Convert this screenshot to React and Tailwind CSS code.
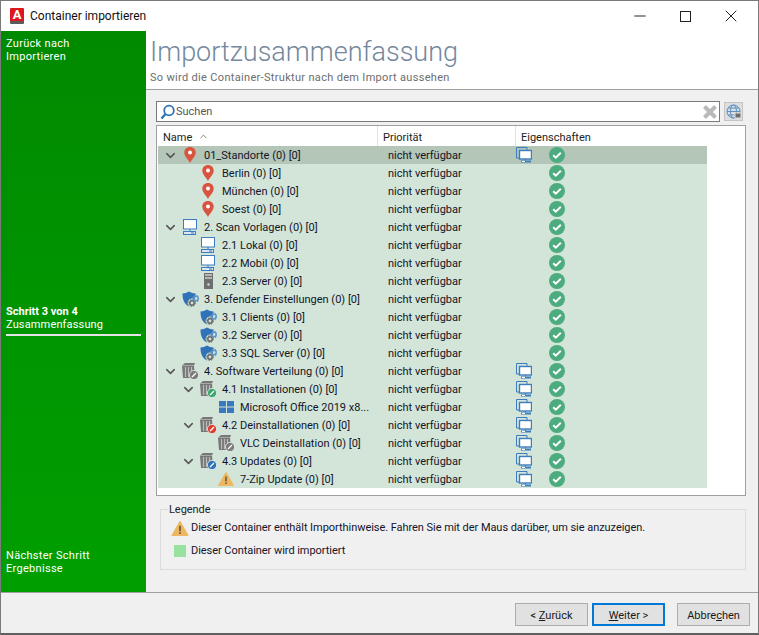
import { ChevronDown, ChevronUp, Minus, X } from 'lucide-react';

const Pin = () => (
  <svg width="12" height="16" viewBox="0 0 12 16">
    <path d="M6 0C2.6 0 0.3 2.4 0.3 5.6 0.3 9.4 4 12.5 6 16 8 12.5 11.7 9.4 11.7 5.6 11.7 2.4 9.4 0 6 0Z" fill="#d9543f" />
    <circle cx="6" cy="5.6" r="2" fill="#fff" />
  </svg>
);

const Monitor = () => (
  <svg width="16" height="16" viewBox="0 0 16 16" fill="none">
    <rect x="1.5" y="0.5" width="13" height="9.5" fill="#fff" stroke="#3d7cc0" />
    <path d="M8 10v2" stroke="#3d7cc0" />
    <rect x="1.5" y="12.5" width="12" height="3" fill="#dbe7f3" stroke="#3d7cc0" />
    <path d="M9 14h3" stroke="#3d7cc0" />
  </svg>
);

const Server = () => (
  <svg width="9" height="16" viewBox="0 0 9 16">
    <rect width="9" height="16" fill="#6f6f6f" />
    <rect x="1" y="1" width="7" height="2" fill="#b5b5b5" />
    <rect x="1" y="4" width="7" height="2" fill="#b5b5b5" />
    <circle cx="4.5" cy="11.5" r="1.2" fill="#d5d5d5" />
  </svg>
);

const Gear = ({ x, y, color = '#666' }) => (
  <g>
    <circle cx={x} cy={y} r="2.2" fill="none" stroke={color} strokeWidth="1.5" />
    <circle cx={x} cy={y} r="3.4" fill="none" stroke={color} strokeWidth="1" strokeDasharray="1.4 1.3" />
  </g>
);

const Shield = () => (
  <svg width="17" height="17" viewBox="0 0 17 17">
    <path d="M7 0.5C5 1.8 2.8 2.4 0.5 2.4 0.5 8.5 2 12.5 7 15.5 12 12.5 13.5 8.5 13.5 2.4 11.2 2.4 9 1.8 7 0.5Z" fill="#2f72b8" />
    <circle cx="10" cy="12" r="4.4" fill="#d2e5d8" />
    <Gear x={10} y={12} />
    <Gear x={14} y={7.5} color="#5d93c8" />
  </svg>
);

const Box = ({ badge = '#7c7c7c' }) => (
  <svg width="17" height="17" viewBox="0 0 17 17">
    <path d="M0 2.5L3 0h10l-1 2.5 1 12.5H1Z" fill="#777" />
    <path d="M3.5 4v10M6.5 4v10M9.5 4v10" stroke="#bcbcbc" strokeWidth="1.2" />
    <path d="M0 2.5h12" stroke="#a9a9a9" />
    <circle cx="12" cy="12" r="4.6" fill={badge} stroke="#e8f0ea" strokeWidth="0.8" />
    <path d="M10 14l4-4" stroke="#fff" strokeWidth="1.3" />
  </svg>
);

const WinLogo = () => (
  <svg width="15" height="12" viewBox="0 0 15 12" fill="#3a78bd">
    <rect width="7" height="5.5" />
    <rect x="8" width="7" height="5.5" />
    <rect y="6.5" width="7" height="5.5" />
    <rect x="8" y="6.5" width="7" height="5.5" />
  </svg>
);

const Warn = ({ w = 16, h = 14 }) => (
  <svg width={w} height={h} viewBox="0 0 16 14">
    <path d="M8 0.5L15.5 13.5H0.5Z" fill="#ecb760" stroke="#ecb760" strokeLinejoin="round" />
    <path d="M8 4.5v5" stroke="#6b5a3a" strokeWidth="1.6" />
    <path d="M8 10.5v1.6" stroke="#6b5a3a" strokeWidth="1.6" />
  </svg>
);

const Screens = () => (
  <svg width="16" height="16" viewBox="0 0 16 16" fill="none">
    <path d="M3.5 11H0.5V0.5H11v2.5" stroke="#3d7cc0" />
    <rect x="3.5" y="3.5" width="12" height="8.5" fill="#fff" stroke="#3d7cc0" strokeWidth="1.4" />
    <path d="M9.5 12v1.5" stroke="#3d7cc0" />
    <rect x="5" y="13.5" width="10" height="2" fill="#3d7cc0" />
    <rect x="6" y="14" width="3" height="1" fill="#fff" />
  </svg>
);

const Check = () => (
  <svg width="16" height="16" viewBox="0 0 16 16" fill="none">
    <circle cx="8" cy="8" r="8" fill="#4cab7f" />
    <path d="M4.2 8.2l2.6 2.5 5-5" stroke="#fff" strokeWidth="2" />
  </svg>
);

const rows = [
  { name: '01_Standorte (0) [0]', level: 0, open: true, icon: <Pin />, screens: true, selected: true },
  { name: 'Berlin (0) [0]', level: 1, icon: <Pin /> },
  { name: 'München (0) [0]', level: 1, icon: <Pin /> },
  { name: 'Soest (0) [0]', level: 1, icon: <Pin /> },
  { name: '2. Scan Vorlagen (0) [0]', level: 0, open: true, icon: <Monitor /> },
  { name: '2.1 Lokal (0) [0]', level: 1, icon: <Monitor /> },
  { name: '2.2 Mobil (0) [0]', level: 1, icon: <Monitor /> },
  { name: '2.3 Server (0) [0]', level: 1, icon: <Server /> },
  { name: '3. Defender Einstellungen (0) [0]', level: 0, open: true, icon: <Shield /> },
  { name: '3.1 Clients (0) [0]', level: 1, icon: <Shield /> },
  { name: '3.2 Server (0) [0]', level: 1, icon: <Shield /> },
  { name: '3.3 SQL Server (0) [0]', level: 1, icon: <Shield /> },
  { name: '4. Software Verteilung (0) [0]', level: 0, open: true, icon: <Box />, screens: true },
  { name: '4.1 Installationen (0) [0]', level: 1, open: true, icon: <Box badge="#3aa76d" />, screens: true },
  { name: 'Microsoft Office 2019 x8...', level: 2, icon: <WinLogo />, screens: true },
  { name: '4.2 Deinstallationen (0) [0]', level: 1, open: true, icon: <Box badge="#d9402f" />, screens: true },
  { name: 'VLC Deinstallation (0) [0]', level: 2, icon: <Box />, screens: true },
  { name: '4.3 Updates (0) [0]', level: 1, open: true, icon: <Box badge="#2f72b8" />, screens: true },
  { name: '7-Zip Update (0) [0]', level: 2, icon: <Warn />, screens: true },
];

const indent = ['w-0', 'w-[18px]', 'w-[36px]'];

const TreeRow = ({ row }) => (
  <div className={`flex h-[18px] items-center ${row.selected ? 'bg-[#b3c6b7]' : 'bg-[#d2e5d8]'}`}>
    <div className="flex w-[220px] items-center pl-[2px]">
      <div className={indent[row.level]} />
      <div className="flex w-[21px] justify-center">
        {row.open && <ChevronDown size={15} strokeWidth={2.4} className="text-[#555]" />}
      </div>
      <div className="flex w-[18px] justify-center">{row.icon}</div>
      <span className="ml-[5px] truncate pt-[2px] leading-[16px]">{row.name}</span>
    </div>
    <div className="w-[138px] pl-[10px] pt-[2px] leading-[16px]">nicht verfügbar</div>
    <div className="flex w-[33px] justify-start">{row.screens && <Screens />}</div>
    <Check />
  </div>
);

const Btn = ({ children, focus }) => (
  <button className={`h-[23px] w-[73px] bg-[#e1e1e1] pt-px text-[#1a1a1a] ${focus ? 'border-2 border-[#0078d7]' : 'border border-[#adadad]'}`}>
    {children}
  </button>
);

export default function App() {
  return (
    <div className="flex h-[635px] w-[759px] flex-col overflow-hidden border border-b-2 border-[#7a7a7a] border-b-[#5f5f5f] bg-[#f0f0f0] font-['Roboto',sans-serif] text-[11px] leading-none text-[#14142a]">
      {/* title bar */}
      <div className="flex h-[30px] shrink-0 items-center bg-white pl-[9px]">
        <div className="flex h-[16px] w-[14px] items-start justify-center overflow-hidden rounded-[1px] border-b-[3px] border-[#5c5c5c] bg-[#e0161f] text-[13px] font-bold leading-[13px] text-white">A</div>
        <span className="ml-[6px] text-[12px] leading-[16px] text-[#111]">Container importieren</span>
        <div className="ml-auto flex items-center text-[#222]">
          <Minus size={18} strokeWidth={1.3} className="mr-[31px]" />
          <div className="mr-[30px] h-[11px] w-[11px] border border-[#222]" />
          <X size={20} strokeWidth={1.2} className="mr-[17px]" />
        </div>
      </div>

      <div className="flex min-h-0 flex-1">
        {/* wizard steps */}
        <div className="flex w-[145px] shrink-0 flex-col bg-gradient-to-b from-[#008a00] to-[#009f00] px-[5px] tracking-[0.3px] text-white">
          <div className="mt-[6px] leading-[13px]">Zurück nach<br />Importieren</div>
          <div className="mt-[242px] border-b-2 border-[#e4e4e4] pb-[3px] leading-[13px]">
            <b className="font-bold tracking-normal">Schritt 3 von 4</b><br />
            <span className="tracking-[0.15px]">Zusammenfassung</span>
          </div>
          <div className="mt-auto mb-[17px] leading-[13px]">Nächster Schritt<br />Ergebnisse</div>
        </div>

        <div className="flex min-w-0 flex-1 flex-col">
          <div className="h-[59px] shrink-0 border-b border-[#a0a0a0] bg-white pl-[4px]">
            <div className="mt-[5px] text-[27px] font-light leading-[32px] text-[#74889c]">Importzusammenfassung</div>
            <div className="mt-[3px] leading-[14px] tracking-[0.32px] text-[#6d6d6d]">So wird die Container-Struktur nach dem Import aussehen</div>
          </div>

          <div className="pl-[10px] pr-[12px]">
            {/* search */}
            <div className="mt-[11px] flex items-center gap-[4px]">
              <div className="flex h-[21px] w-[564px] items-center border border-[#7a7a7a] bg-white pl-[3px] pr-px">
                <svg width="15" height="16" viewBox="0 0 15 16" fill="none">
                  <circle cx="9" cy="6.5" r="4.8" stroke="#2f72b8" strokeWidth="1.8" />
                  <path d="M5.5 10L1.5 14.5" stroke="#2f72b8" strokeWidth="2.4" />
                </svg>
                <span className="ml-px leading-[14px] text-[#555]">Suchen</span>
                <svg width="16" height="16" viewBox="0 0 16 16" fill="none" className="ml-auto">
                  <path d="M2.5 2.5l11 11M13.5 2.5l-11 11" stroke="#b9b9b9" strokeWidth="4" />
                </svg>
              </div>
              <div className="flex h-[19px] w-[19px] items-center justify-center border border-[#c4c4c4] bg-[#dedede]">
                <svg width="16" height="16" viewBox="0 0 16 16" fill="none" stroke="#5a90c5">
                  <circle cx="7.5" cy="7.5" r="6.5" />
                  <ellipse cx="7.5" cy="7.5" rx="3" ry="6.5" />
                  <path d="M1 7.5h13M2 4h11M2 11h11" />
                  <rect x="9" y="9" width="6" height="5" fill="#6e6e6e" stroke="#dedede" />
                </svg>
              </div>
            </div>

            {/* tree */}
            <div className="mt-[3px] h-[371px] border border-[#a0a0a0] bg-white">
              <div className="flex h-[20px] items-center leading-[14px] text-[#222]">
                <div className="flex h-full w-[221px] items-center border-r border-[#e2e2e2] pl-[6px]">
                  <span className="pt-[3px]">Name</span>
                  <ChevronUp size={11} strokeWidth={1.2} className="ml-[6px]" />
                </div>
                <div className="flex h-full w-[138px] items-center border-r border-[#e2e2e2] pl-[5px] pt-[3px]">Priorität</div>
                <div className="pl-[5px] pt-[3px]">Eigenschaften</div>
              </div>
              <div className="ml-px w-[549px]">
                {rows.map((row) => (
                  <TreeRow key={row.name} row={row} />
                ))}
              </div>
            </div>

            {/* legend */}
            <div className="relative mt-[13px] ml-[4px] h-[61px] w-[586px] border border-[#dcdcdc] pl-[10px] pt-[9px] leading-[14px] tracking-[-0.05px]">
              <span className="absolute left-[7px] top-[-7px] bg-[#f0f0f0] px-[1px] text-[#222]">Legende</span>
              <div className="flex h-[18px] items-center">
                <Warn w={18} h={15} />
                <span className="ml-[2px]">Dieser Container enthält Importhinweise. Fahren Sie mit der Maus darüber, um sie anzuzeigen.</span>
              </div>
              <div className="mt-[5px] flex h-[18px] items-center">
                <div className="ml-[3px] h-[12px] w-[12px] bg-[#98e2a0]" />
                <span className="ml-[5px]">Dieser Container wird importiert</span>
              </div>
            </div>
          </div>
        </div>
      </div>

      {/* footer */}
      <div className="flex h-[41px] shrink-0 items-start border-t border-[#a0a0a0] pt-[10px] pl-[514px]">
        <Btn>&lt; <u>Z</u>urück</Btn>
        <div className="ml-[4px]"><Btn focus><u>W</u>eiter &gt;</Btn></div>
        <div className="ml-[12px]"><Btn>Abbre<u>c</u>hen</Btn></div>
      </div>
    </div>
  );
}
